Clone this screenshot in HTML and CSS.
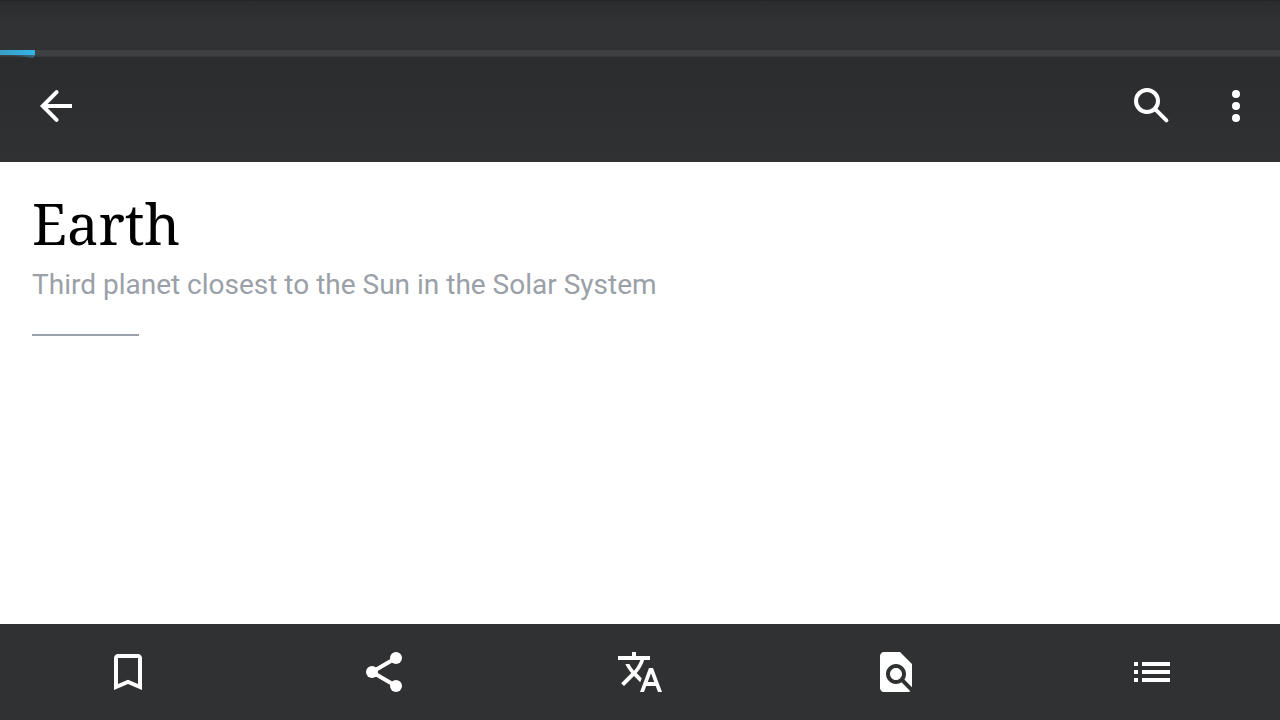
FILE: index.html
```html
<!DOCTYPE html>
<html lang="en">
<head>
<meta charset="utf-8">
<meta name="viewport" content="width=device-width, initial-scale=1">
<title>Earth</title>
<link rel="stylesheet" href="styles.css">
</head>
<body class="app">
<header class="top">
  <div class="status"></div>
  <div class="progress" role="progressbar" aria-label="Loading article" aria-valuenow="3" aria-valuemin="0" aria-valuemax="100">
    <svg class="progress-fill" viewBox="0 0 35 8" aria-hidden="true">
      <defs>
        <linearGradient id="bar"><stop offset="0" stop-color="#389ec7"/><stop offset="1" stop-color="#33b5e5"/></linearGradient>
        <linearGradient id="glow"><stop offset="0" stop-color="#33b5e5" stop-opacity="0"/><stop offset="1" stop-color="#33b5e5" stop-opacity=".4"/></linearGradient>
      </defs>
      <path d="M8 5h27l-2 3z" fill="url(#glow)"/>
      <path d="M0 0h35v5H0z" fill="url(#bar)"/>
    </svg>
  </div>
  <nav class="toolbar" aria-label="Article">
    <button class="icon-button" type="button" aria-label="Back">
      <svg class="icon line" viewBox="0 0 24 24"><path d="M20 12H5.4"/><path class="round" d="M12.3 5.1L5.4 12l6.9 6.9"/></svg>
    </button>
    <div class="actions">
      <button class="icon-button" type="button" aria-label="Search">
        <svg class="icon line" viewBox="0 0 24 24"><circle cx="9.5" cy="9.5" r="5.5"/><path class="round" d="M14.2 14.2l5 5"/></svg>
      </button>
      <button class="icon-button" type="button" aria-label="More options">
        <svg class="icon" viewBox="0 0 24 24"><circle cx="12" cy="6" r="2"/><circle cx="12" cy="12" r="2"/><circle cx="12" cy="18" r="2"/></svg>
      </button>
    </div>
  </nav>
</header>
<main class="article">
  <h1 class="title">Earth</h1>
  <p class="description">Third planet closest to the Sun in the Solar System</p>
  <hr class="divider">
</main>
<footer class="tabs">
  <button class="tab" type="button" aria-label="Save">
    <svg class="icon" viewBox="0 0 24 24"><path d="M17 3H7c-1.1 0-2 .9-2 2v16l7-3 7 3V5c0-1.1-.9-2-2-2zm0 15l-5-2.18L7 18V5h10v13z"/></svg>
  </button>
  <button class="tab" type="button" aria-label="Share">
    <svg class="icon" viewBox="0 0 24 24"><path d="M18 5L6 12l12 7" fill="none" stroke="currentColor" stroke-width="2"/><circle cx="18" cy="5" r="3"/><circle cx="6" cy="12" r="3"/><circle cx="18" cy="19" r="3"/></svg>
  </button>
  <button class="tab" type="button" aria-label="Language">
    <svg class="icon" viewBox="0 0 24 24"><path d="M12.87 15.07l-2.54-2.51.03-.03c1.74-1.94 2.98-4.17 3.71-6.53H17V4h-7V2H8v2H1v1.99h11.17C11.5 7.92 10.44 9.75 9 11.35 8.07 10.32 7.3 9.19 6.69 8h-2c.73 1.63 1.73 3.17 2.98 4.56l-5.09 5.02L4 19l5-5 3.11 3.11.76-2.04zM18.5 10h-2L12 22h2l1.12-3h4.75L21 22h2l-4.5-12zm-2.62 7l1.62-4.33L19.12 17h-3.24z"/></svg>
  </button>
  <button class="tab" type="button" aria-label="Find in page">
    <svg class="icon" viewBox="0 0 24 24"><path d="M20 19.59V8l-6-6H6c-1.1 0-1.99.9-1.99 2L4 20c0 1.1.89 2 1.99 2H18c.45 0 .85-.15 1.19-.4l-4.43-4.43c-.8.52-1.74.83-2.76.83-2.76 0-5-2.24-5-5s2.24-5 5-5 5 2.24 5 5c0 1.02-.31 1.96-.83 2.75L20 19.59zM9 13c0 1.66 1.34 3 3 3s3-1.34 3-3-1.34-3-3-3-3 1.34-3 3z"/></svg>
  </button>
  <button class="tab" type="button" aria-label="Contents">
    <svg class="icon" viewBox="0 0 24 24"><path d="M3 7h2v2H3zM7 7h14v2H7zM3 11h2v2H3zM7 11h14v2H7zM3 15h2v2H3zM7 15h14v2H7z"/></svg>
  </button>
</footer>
</body>
</html>
```
FILE: styles.css
```css
* { box-sizing: border-box; }

.app {
  margin: 0;
  min-height: 100vh;
  display: flex;
  flex-direction: column;
  background: #fff;
  color: #000;
  font-family: Roboto, sans-serif;
}

.top { color: #fff; }

.status {
  height: 50px;
  border-top: 1px solid #232425;
  background: linear-gradient(#2b2c2d, #313234 24px);
}

.progress {
  height: 7px;
  background: #3f4042;
  border-bottom: 1px solid #37383a;
}

.progress-fill {
  display: block;
  width: 35px;
  height: 8px;
}

.toolbar {
  display: flex;
  justify-content: space-between;
  padding: 25px 8px 32px 20px;
  background: linear-gradient(#2b2c2e, #303133);
}

.actions {
  display: flex;
  gap: 12px;
}

.icon-button,
.tab {
  margin: 0;
  padding: 0;
  border: 0;
  background: none;
  color: inherit;
  cursor: pointer;
}

.icon-button { padding: 0 12px; }

.icon {
  display: block;
  width: 48px;
  height: 48px;
  fill: currentColor;
}

.line {
  fill: none;
  stroke: currentColor;
  stroke-width: 2;
}

.round { stroke-linecap: round; }

.article {
  flex: 1;
  padding: 25px 32px;
}

.title {
  margin: 0;
  font-family: "Noto Serif", "Droid Serif", "DejaVu Serif", serif;
  font-size: 56px;
  font-weight: 400;
  line-height: 72px;
}

.description {
  margin: 8px 0 0;
  color: #9aa0a8;
  font-size: 28px;
  line-height: 36px;
}

.divider {
  width: 107px;
  height: 2px;
  margin: 31px 0 0;
  border: 0;
  background: #9aa0ab;
}

.tabs {
  display: grid;
  grid-template-columns: repeat(5, 1fr);
  background: #303133;
  color: #fff;
}

.tab {
  display: flex;
  justify-content: center;
  padding: 24px 0;
}
```
